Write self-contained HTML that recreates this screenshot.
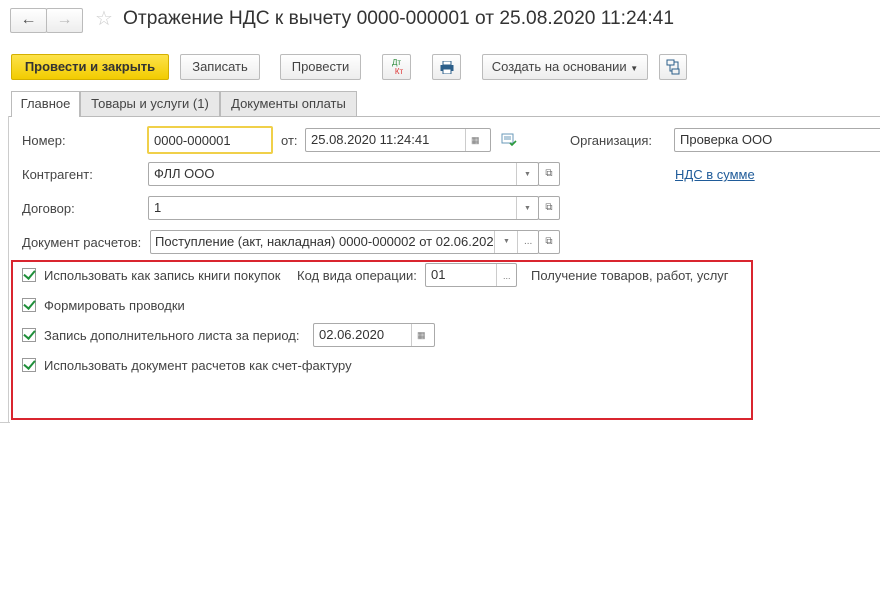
<!DOCTYPE html><html><head><meta charset="utf-8"><style>
*{box-sizing:border-box}
body{margin:0;width:880px;height:591px;background:#fff;font-family:"Liberation Sans",sans-serif;font-size:12px;color:#333;position:relative;overflow:hidden}
.a{position:absolute}
.btn{position:absolute;border:1px solid #bbb;border-radius:2px;background:linear-gradient(#fff,#ededed);height:26px;line-height:24px;text-align:center;color:#444;font-size:13px}
.f{position:absolute;border:1px solid #aaa;border-radius:2px;background:#fff;height:24px;line-height:22px;padding-left:5px;color:#333;font-size:13px;white-space:nowrap;overflow:hidden}
.sep{position:absolute;top:0;bottom:0;border-left:1px solid #ccc}
.lbl{position:absolute;font-size:13px;color:#444}
.cb{position:absolute;width:14px;height:14px;border:1px solid #999;background:#fff}
.cb:after{content:"";position:absolute;left:3px;top:-1px;width:5px;height:9px;border:solid #1f8f3a;border-width:0 2.5px 2.5px 0;transform:rotate(40deg)}
.tab{position:absolute;top:91px;height:25px;line-height:24px;border:1px solid #bbb;border-bottom:none;background:#e8e8e8;text-align:center;font-size:13px;color:#444}
.ic{position:absolute;font-size:9px;color:#777}
</style></head><body>
<div class="btn" style="left:10px;top:8px;width:37px;height:25px;font-size:16px;line-height:22px;color:#555">&#8592;</div>
<div class="btn" style="left:46px;top:8px;width:37px;height:25px;font-size:16px;line-height:22px;color:#bbb">&#8594;</div>
<div class="a" style="left:95px;top:6px;font-size:20px;color:#ccc">&#9734;</div>
<div class="a" style="left:123px;top:8px;font-size:19.2px;color:#333">Отражение НДС к вычету 0000-000001 от 25.08.2020 11:24:41</div>

<div class="btn" style="left:11px;top:54px;width:158px;background:linear-gradient(#fde24a,#f2cc00);border-color:#d4b000;font-weight:bold;color:#333">Провести и закрыть</div>
<div class="btn" style="left:180px;top:54px;width:80px">Записать</div>
<div class="btn" style="left:280px;top:54px;width:81px">Провести</div>
<div class="btn" style="left:382px;top:54px;width:29px;font-size:8px;line-height:9px;padding-top:3px"><span style="color:#2a8a3a">Дт</span><br><span style="color:#d33;padding-left:5px">Кт</span></div>
<div class="btn" style="left:432px;top:54px;width:29px"><svg width="14" height="13" style="margin-top:6px" viewBox="0 0 14 13"><rect x="3" y="0" width="8" height="4" fill="#fff" stroke="#2c5f8a"/><rect x="0.5" y="4" width="13" height="6" fill="#2c5f8a"/><rect x="3" y="8" width="8" height="5" fill="#fff" stroke="#2c5f8a"/></svg></div>
<div class="btn" style="left:482px;top:54px;width:166px">Создать на основании <span style="font-size:8px">▼</span></div>
<div class="btn" style="left:659px;top:54px;width:28px"><svg width="14" height="16" style="margin-top:4px" viewBox="0 0 14 16"><rect x="1" y="1" width="7" height="5" fill="none" stroke="#2c5f8a"/><rect x="6" y="10" width="7" height="5" fill="none" stroke="#2c5f8a"/><path d="M4 6v6h2M8 3h4v7" fill="none" stroke="#2c5f8a"/></svg></div>

<div class="a" style="left:8px;top:116px;width:880px;border-top:1px solid #bbb"></div>
<div class="a" style="left:8px;top:116px;height:306px;border-left:1px solid #ccc"></div>
<div class="a" style="left:0;top:422px;width:10px;border-top:1px solid #ccc"></div>
<div class="tab" style="left:11px;width:69px;background:#fff;height:26px;z-index:2">Главное</div>
<div class="tab" style="left:80px;width:140px">Товары и услуги (1)</div>
<div class="tab" style="left:220px;width:137px">Документы оплаты</div>

<div class="lbl" style="left:22px;top:133px">Номер:</div>
<div class="f" style="left:147px;top:126px;width:126px;height:28px;line-height:26px;border:2px solid #f0d04a">0000-000001</div>
<div class="lbl" style="left:281px;top:133px">от:</div>
<div class="f" style="left:305px;top:128px;width:186px">25.08.2020 11:24:41<div class="sep" style="left:159px"></div><div class="ic" style="left:165px;top:0">&#9638;</div></div>
<svg class="a" style="left:501px;top:133px" width="16" height="14" viewBox="0 0 16 14"><rect x="1" y="1" width="11" height="9" fill="none" stroke="#6a9ab8"/><path d="M3 4h7M3 6h7" stroke="#6a9ab8"/><path d="M9 10l2 2 4-4" fill="none" stroke="#2a9a3a" stroke-width="1.6"/></svg>
<div class="lbl" style="left:570px;top:133px">Организация:</div>
<div class="f" style="left:674px;top:128px;width:220px">Проверка ООО</div>
<div class="a" style="left:675px;top:167px;font-size:13px;color:#1f5b99;text-decoration:underline">НДС в сумме</div>

<div class="lbl" style="left:22px;top:167px">Контрагент:</div>
<div class="f" style="left:148px;top:162px;width:391px">ФЛЛ ООО<div class="sep" style="left:367px"></div><div class="ic" style="left:375px;top:1px;font-size:7px">▼</div></div>
<div class="f" style="left:538px;top:162px;width:22px;padding:0;text-align:center;font-size:10px;color:#666">⧉</div>
<div class="lbl" style="left:22px;top:201px">Договор:</div>
<div class="f" style="left:148px;top:196px;width:391px">1<div class="sep" style="left:367px"></div><div class="ic" style="left:375px;top:1px;font-size:7px">▼</div></div>
<div class="f" style="left:538px;top:196px;width:22px;padding:0;text-align:center;font-size:10px;color:#666">⧉</div>
<div class="lbl" style="left:22px;top:235px">Документ расчетов:</div>
<div class="f" style="left:150px;top:230px;width:389px;padding-left:4px">Поступление (акт, накладная) 0000-000002 от 02.06.2020<div class="a" style="left:343px;top:0;bottom:0;width:45px;background:#fff;border-left:1px solid #ccc"><span style="position:absolute;left:8px;font-size:7px;color:#777">▼</span><span style="position:absolute;left:22px;top:0;bottom:0;border-left:1px solid #ccc;padding-left:6px;color:#777;font-size:10px">...</span></div></div>
<div class="f" style="left:538px;top:230px;width:22px;padding:0;text-align:center;font-size:10px;color:#666">⧉</div>

<div class="a" style="left:11px;top:260px;width:742px;height:160px;border:2px solid #d9252f"></div>
<div class="cb" style="left:22px;top:268px"></div>
<div class="lbl" style="left:44px;top:268px">Использовать как запись книги покупок</div>
<div class="lbl" style="left:297px;top:268px">Код вида операции:</div>
<div class="f" style="left:425px;top:263px;width:92px">01<div class="sep" style="left:70px"></div><div class="ic" style="left:77px;top:1px">...</div></div>
<div class="lbl" style="left:531px;top:268px">Получение товаров, работ, услуг</div>
<div class="cb" style="left:22px;top:298px"></div>
<div class="lbl" style="left:44px;top:298px">Формировать проводки</div>
<div class="cb" style="left:22px;top:328px"></div>
<div class="lbl" style="left:44px;top:328px">Запись дополнительного листа за период:</div>
<div class="f" style="left:313px;top:323px;width:122px">02.06.2020<div class="sep" style="left:97px"></div><div class="ic" style="left:103px;top:0">&#9638;</div></div>
<div class="cb" style="left:22px;top:358px"></div>
<div class="lbl" style="left:44px;top:358px">Использовать документ расчетов как счет-фактуру</div>
</body></html>
